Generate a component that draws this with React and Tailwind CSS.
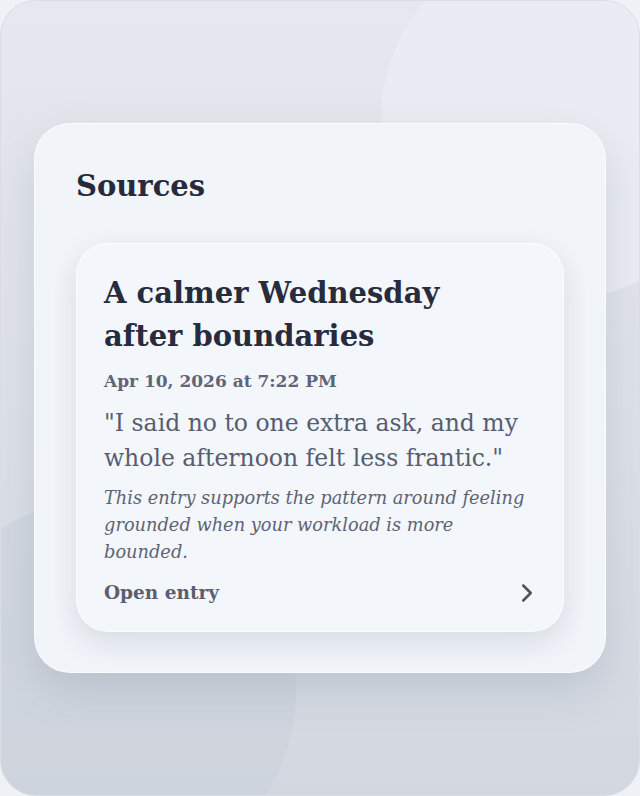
import { ChevronRight } from 'lucide-react'

const serif = { fontFamily: '"DejaVu Serif", "Liberation Serif", serif' }

export default function App() {
  return (
    <div className="h-[796px] w-[640px] bg-[#eef1f5]" style={serif}>
      <div className="relative h-full w-full overflow-hidden rounded-[36px] border border-[#d9dde4] bg-gradient-to-b from-[#e5e8ee] via-[#dde1e8] to-[#d3d8e0]">
        {/* soft background blobs */}
        <div className="absolute left-[380px] top-[-62px] h-[360px] w-[360px] rounded-full bg-[#e9ecf2]" />
        <div className="absolute left-[-89px] top-[498px] h-[384px] w-[384px] rounded-full bg-[#c9cfd9]/50" />

        <div className="relative px-[33px] pt-[122px]">
          <section className="rounded-[36px] border border-white/70 bg-[#f1f4f9] px-[41px] pb-[40px] pt-[42px] shadow-[0_18px_40px_rgba(120,132,156,0.24)]">
            <h2 className="text-[29px] font-bold leading-[40px] text-[#262a3b]">Sources</h2>

            <article className="mt-[37px] rounded-[32px] border border-white/80 bg-[#f3f6fb] px-[27px] pb-[23px] pt-[28px] shadow-[0_10px_28px_rgba(120,132,156,0.22)]">
              <h3 className="max-w-[380px] text-[29px] font-bold leading-[43px] text-[#272b3b]">
                A calmer Wednesday after boundaries
              </h3>
              <p className="mt-[10px] text-[17px] font-bold leading-[26px] text-[#5f6577]">
                Apr 10, 2026 at 7:22 PM
              </p>
              <p className="mt-[12px] text-[23.5px] leading-[35px] text-[#575d70]">
                "I said no to one extra ask, and my whole afternoon felt less frantic."
              </p>
              <p className="mt-[8px] max-w-[428px] text-[17.8px] italic leading-[27px] text-[#5d6374]">
                This entry supports the pattern around feeling grounded when your workload is more
                bounded.
              </p>
              <button
                type="button"
                className="mt-[13px] flex w-full items-center justify-between text-[#595f70]"
              >
                <span className="text-[18.5px] font-bold leading-[28px]">Open entry</span>
                <ChevronRight size={30} strokeWidth={2} className="-mr-[6px] text-[#4c5163]" />
              </button>
            </article>
          </section>
        </div>
      </div>
    </div>
  )
}
